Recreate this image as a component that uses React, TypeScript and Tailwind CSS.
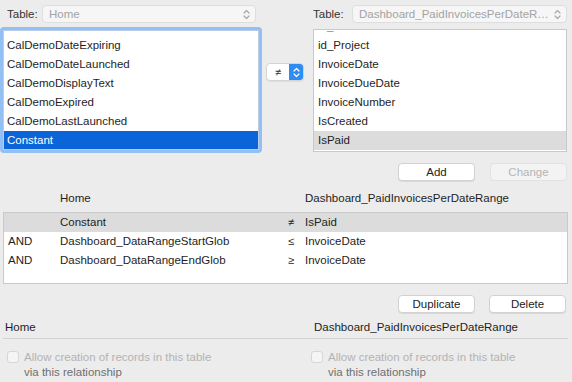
import React from 'react';

const leftItems = ['CalDemoDateExpiring', 'CalDemoDateLaunched', 'CalDemoDisplayText', 'CalDemoExpired', 'CalDemoLastLaunched', 'Constant'];
const rightItems = ['id_Project', 'InvoiceDate', 'InvoiceDueDate', 'InvoiceNumber', 'IsCreated', 'IsPaid'];

const rows = [
  { join: '', left: 'Constant', op: '≠', right: 'IsPaid', selected: true },
  { join: 'AND', left: 'Dashboard_DataRangeStartGlob', op: '≤', right: 'InvoiceDate', selected: false },
  { join: 'AND', left: 'Dashboard_DataRangeEndGlob', op: '≥', right: 'InvoiceDate', selected: false },
];

function Chevrons({ color = '#9a9a9a' }: { color?: string }) {
  return (
    <svg width="7" height="11" viewBox="0 0 7 11" fill="none" stroke={color} strokeWidth="1.2" strokeLinecap="round" strokeLinejoin="round">
      <path d="M1 4 L3.5 1.5 L6 4" />
      <path d="M1 7 L3.5 9.5 L6 7" />
    </svg>
  );
}

function TablePopup({ value, width }: { value: string; width: string }) {
  return (
    <div className={`${width} h-[18px] rounded-[4px] bg-[#f6f6f6] border border-[#dedede] flex items-center pl-[6px] pr-[5px]`}>
      <span className="flex-1 truncate text-[#a3a3a3]">{value}</span>
      <Chevrons color="#a8a8a8" />
    </div>
  );
}

function Button({ label, disabled }: { label: string; disabled?: boolean }) {
  return (
    <div
      className={`w-[77px] h-[18px] rounded-[4px] flex items-center justify-center ${
        disabled ? 'bg-[#f3f3f3] text-[#b5b5b5] border border-[#e2e2e2]' : 'bg-white text-[#222] border border-[#d2d2d2] shadow-[0_1px_0_rgba(0,0,0,0.08)]'
      }`}
    >
      {label}
    </div>
  );
}

function Checkbox() {
  return <div className="w-[12px] h-[12px] mt-[1px] rounded-[3px] border border-[#d6d6d6] bg-[#f5f5f5] shrink-0" />;
}

export default function App() {
  return (
    <div className="w-[572px] h-[382px] overflow-hidden bg-[#ececec] text-[11.5px] leading-[19px] text-[#1e1e1e] font-['Liberation_Sans',Arial,sans-serif]">
      {/* top: field lists */}
      <div className="flex pt-[5px]">
        <div className="w-[262px]">
          <div className="flex items-center h-[18px]">
            <span className="w-[42px] pl-[7px] text-[#333]">Table:</span>
            <TablePopup value="Home" width="w-[214px]" />
          </div>
          <div className="mt-[4px] h-[126px] rounded-[4px] border-[3px] border-[#94bff4]">
            <div className="h-full bg-white border border-[#b9cde6] overflow-hidden">
              <div className="-mt-[14px]">
                <div className="h-[19px] pl-[3px] text-[#888]">CalDemoDateCreated</div>
                {leftItems.map((it) => (
                  <div key={it} className={`h-[19px] pl-[3px] ${it === 'Constant' ? 'bg-[#0b64d8] text-white' : ''}`}>
                    {it}
                  </div>
                ))}
              </div>
            </div>
          </div>
        </div>

        <div className="ml-[4px] w-[38px] pt-[58px]">
          <div className="h-[18px] flex rounded-[4px] border border-[#d4d4d4] bg-white shadow-[0_1px_0_rgba(0,0,0,0.06)] overflow-hidden">
            <div className="flex-1 flex items-center justify-center text-[11px] text-[#333]">≠</div>
            <div className="w-[14px] bg-[#2f8cf4] flex items-center justify-center">
              <Chevrons color="#ffffff" />
            </div>
          </div>
        </div>

        <div className="ml-[9px] w-[254px]">
          <div className="flex items-center h-[18px]">
            <span className="w-[39px] text-[#333]">Table:</span>
            <TablePopup value="Dashboard_PaidInvoicesPerDateRange" width="w-[215px]" />
          </div>
          <div className="mt-[6px] h-[123px] bg-white border border-[#c9c9c9] overflow-hidden">
            <div className="-mt-[13px]">
              <div className="h-[19px] pl-[4px] text-[#888]">id_Client</div>
              {rightItems.map((it) => (
                <div key={it} className={`h-[19px] pl-[4px] ${it === 'IsPaid' ? 'bg-[#dcdcdc]' : ''}`}>
                  {it}
                </div>
              ))}
            </div>
          </div>
        </div>
      </div>

      {/* add / change */}
      <div className="flex gap-[15px] pl-[398px] mt-[10px]">
        <Button label="Add" />
        <Button label="Change" disabled />
      </div>

      {/* criteria header */}
      <div className="flex mt-[8px] h-[19px]">
        <span className="pl-[60px] w-[305px]">Home</span>
        <span>Dashboard_PaidInvoicesPerDateRange</span>
      </div>

      {/* criteria list */}
      <div className="ml-[3px] mt-[4px] w-[565px] h-[72px] bg-white border border-[#c9c9c9]">
        {rows.map((r, i) => (
          <div key={i} className={`flex h-[19px] ${r.selected ? 'bg-[#dcdcdc]' : ''}`}>
            <span className="w-[56px] pl-[4px]">{r.join}</span>
            <span className="w-[228px]">{r.left}</span>
            <span className="w-[17px] text-[11px]">{r.op}</span>
            <span>{r.right}</span>
          </div>
        ))}
      </div>

      {/* duplicate / delete */}
      <div className="flex gap-[14px] pl-[398px] mt-[11px]">
        <Button label="Duplicate" />
        <Button label="Delete" />
      </div>

      {/* bottom options */}
      <div className="flex mt-[5px] h-[19px]">
        <span className="pl-[5px] w-[314px]">Home</span>
        <span>Dashboard_PaidInvoicesPerDateRange</span>
      </div>
      <div className="ml-[3px] mt-[1px] w-[565px] h-px bg-[#d3d3d3]" />
      <div className="flex mt-[11px] leading-[15px]">
        <div className="w-[311px] pl-[7px] flex gap-[5px]">
          <Checkbox />
          <div>
            <div className="text-[#b3b3b3]">Allow creation of records in this table</div>
            <div className="text-[#6f6f6f]">via this relationship</div>
          </div>
        </div>
        <div className="flex gap-[5px]">
          <Checkbox />
          <div>
            <div className="text-[#b3b3b3]">Allow creation of records in this table</div>
            <div className="text-[#6f6f6f]">via this relationship</div>
          </div>
        </div>
      </div>
    </div>
  );
}
